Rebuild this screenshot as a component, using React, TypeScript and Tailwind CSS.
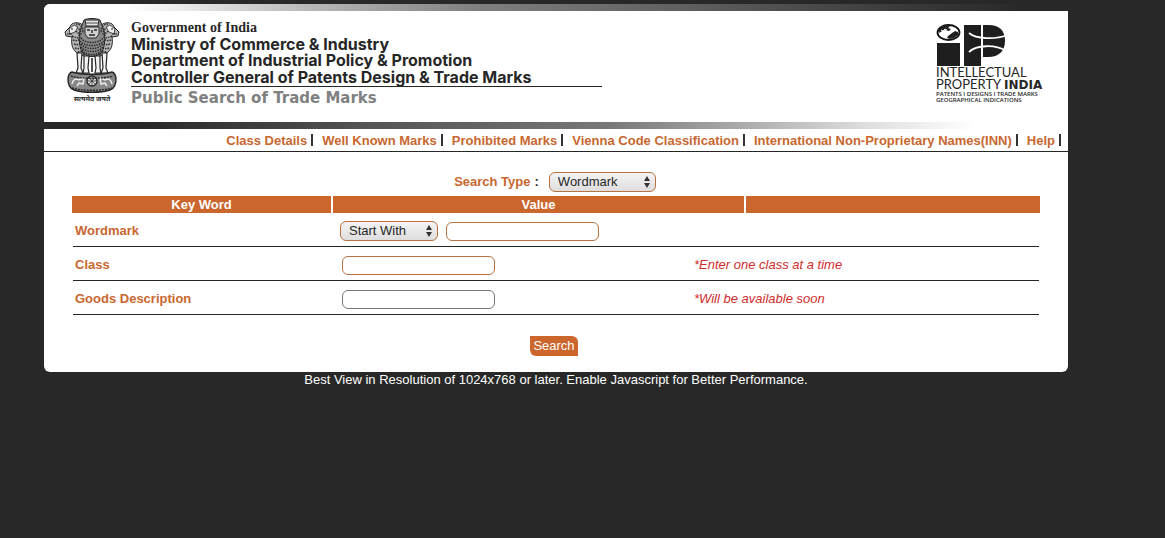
import React from "react";

const links = [
  "Class Details",
  "Well Known Marks",
  "Prohibited Marks",
  "Vienna Code Classification",
  "International Non-Proprietary Names(INN)",
  "Help",
];

function Emblem() {
  const dark = "#262626";
  return (
    <svg viewBox="0 0 56 76" className="h-[76px] w-14" role="img" aria-label="State Emblem of India">
      <g fill="#b5b5b5" stroke={dark} strokeWidth="1">
        <path d="M20 8C15 3 7 4 6 9L1 14l1 4 6 1c-1 6 0 12 4 15l8 4z" />
        <path d="M36 8C41 3 49 4 50 9l5 5-1 4-6 1c1 6 0 12-4 15l-8 4z" />
        <path d="M20 2c3-2 13-2 16 0l3 8c3 6 2 18-1 24-5 6-15 6-20 0-3-6-4-18-1-24z" fill="#8a8a8a" />
      </g>
      <g fill="none" stroke={dark} strokeWidth="1.500" strokeDasharray="1.500 1">
        <path d="M17 20c4 6 18 6 22 0M16 23c5 6 19 6 24 0M17 26c5 6 17 6 22 0M17 29c5 6 17 6 22 0M18 32c4 6 16 6 20 0M20 36c4 3 12 3 16 0" />
        <path d="M12 6c5 0 7 4 7 9M10 9c5 0 7 4 7 8M9 13c4 0 6 2 7 6M8 18c4 2 6 2 9 1M9 22c3 1 5 1 7-1M10 26c3 1 5 1 7-1M11 30c3 1 5 1 7-1M14 34l5-1" />
        <path d="M44 6c-5 0-7 4-7 9M46 9c-5 0-7 4-7 8M47 13c-4 0-6 2-7 6M48 18c-4 2-6 2-9 1M47 22c-3 1-5 1-7-1M46 26c-3 1-5 1-7-1M45 30c-3 1-5 1-7-1M42 34l-5-1" />
      </g>
      <path d="M21 2h14l-1 6H22z" fill="#e4e4e4" stroke={dark} />
      <path d="M22 5h12" stroke={dark} strokeWidth=".8" />
      <path d="M21 9h14v7l-3 4h-8l-3-4z" fill="#d0d0d0" stroke={dark} />
      <path d="M23 12h3m4 0h3M28 12v3M25 17h6" stroke={dark} strokeWidth="1.400" />
      <path d="M5 11l5-4 4 2-3 5-5 2zM51 11l-5-4-4 2 3 5 5 2z" fill="#eee" stroke={dark} strokeWidth=".8" />
      <path d="M3 16h5M53 16h-5M7 11h2M49 11h-2" stroke={dark} strokeWidth="1.200" />
      <g fill="#f2f2f2" stroke={dark} strokeWidth="1.200">
        <path d="M13 35h5l-1 15 2 5h-7l2-5z" />
        <path d="M20 38h5l-1 12 1 5h-6l1-5z" />
        <path d="M31 38h5v12l1 5h-6l1-5z" />
        <path d="M38 35h5l-1 15 2 5h-7l2-5z" />
      </g>
      <path d="M27 40h2v14h-2z" fill="#555" />
      <path d="M8 54c8 3 32 3 40 0 3 1 4 4 4 8s-2 9-6 10c-9 3-27 3-36 0-4-1-6-6-6-10s1-7 4-8z" fill="#888" stroke={dark} strokeWidth="1.400" />
      <circle cx="28" cy="63" r="5" fill="#ddd" stroke={dark} strokeWidth="1.300" />
      <path d="M28 58v10M23 63h10M24.500 59.500l7 7M31.500 59.500l-7 7" stroke={dark} strokeWidth=".7" />
      <path d="M8 66c1-5 4-6 7-4l5-2-1 6-4-1-2 3M48 66c-1-5-4-6-7-4l-5-2 1 6 4-1 2 3" fill="none" stroke="#eee" strokeWidth="1.500" />
      <path d="M7 58c9 3 33 3 42 0M8 70c9 3 31 3 40 0" fill="none" stroke={dark} strokeWidth="1.400" strokeDasharray="2 1" />
    </svg>
  );
}

function IpLogo() {
  return (
    <div className="w-[114px] text-[#262626]">
      <svg viewBox="0 0 72 42" className="block h-[42px] w-[72px]" aria-hidden="true">
        <ellipse cx="12.500" cy="8.500" rx="11" ry="7.500" fill="#fff" stroke="#111" strokeWidth="1.800" />
        <path d="M2 6c2-4 8-6 13-5l-3 3 3 1-2 2-4-1-3 1-3 2z" fill="#1e1e1e" />
        <path d="M16 9l3-2 3 1 0 3-4 3-4 1-3-1 1-2z" fill="#1e1e1e" />
        <path d="M5 6l2 1 2-2 2 1" stroke="#fff" strokeWidth="1" fill="none" />
        <path d="M1 19h23v23H1zM28 1h17v41H28z" fill="#1e1e1e" />
        <path d="M47 1h5c12 0 17 6 17 16s-6 16-17 16h-5z" fill="#1e1e1e" />
        <path d="M33 9c7 6 26 7 38 2M33 28c7-7 26-8 37-1" fill="none" stroke="#fff" strokeWidth="1.800" />
      </svg>
      <div className="font-['Lato'] text-[13px] leading-3">INTELLECTUAL</div>
      <div className="whitespace-nowrap font-['Lato'] text-[13px] leading-3">
        PROPERTY <span className="font-['DejaVu_Sans'] text-[12px] leading-3 font-bold">INDIA</span>
      </div>
      <div className="whitespace-nowrap font-['Open_Sans'] text-[6px] leading-[6px] font-semibold">PATENTS I DESIGNS I TRADE MARKS</div>
      <div className="whitespace-nowrap font-['Open_Sans'] text-[6px] leading-[6px] font-semibold">GEOGRAPHICAL INDICATIONS</div>
    </div>
  );
}

function Picker({ id, label, value, options, width }: { id: string; label: string; value: string; options: string[]; width: string }) {
  return (
    <span className={`relative inline-flex ${width}`}>
      <select
        id={id}
        aria-label={label}
        defaultValue={value}
        className="h-5 w-full appearance-none rounded-md border border-[#b87340] bg-linear-to-b from-[#f4f4f4] to-[#dedede] pl-2 text-[13px] leading-4 text-[#262626]"
      >
        {options.map((o) => (
          <option key={o}>{o}</option>
        ))}
      </select>
      <svg viewBox="0 0 6 12" className="pointer-events-none absolute top-1 right-[6px] h-3 w-[6px]" aria-hidden="true">
        <path d="M3 0l3 5H0zM3 12l3-5H0z" fill="#333" />
      </svg>
    </span>
  );
}

const field = "block h-[19px] w-[153px] rounded-md border bg-white px-2 text-[13px]";
const row = "flex h-[34px] items-center border-b border-[#262626] pt-[3px]";

export default function App() {
  return (
    <div className="min-h-screen bg-[#282828] pt-1 pl-11 font-['Liberation_Sans',Arial,sans-serif] text-[13px] text-[#262626]">
      <main className="max-w-[1024px] overflow-hidden rounded-b-md rounded-tl-md bg-white">
        <div className="h-[7px] bg-[linear-gradient(to_right,#fff_8%,#bbb_25%,#808080_42%,#606060_62%,#3a3a3a_84%,#282828_96%)]" />
        <header className="flex h-[111px] justify-between pr-[18px] pl-[19px]">
          <div className="flex">
            <div className="flex w-[58px] flex-col items-center pt-[7px]">
              <Emblem />
              <span className="font-['Noto_Sans','Noto_Sans_Devanagari',sans-serif] text-[7px] leading-[10px] font-bold whitespace-nowrap">सत्यमेव जयते</span>
            </div>
            <div className="pt-2 pl-[10px] whitespace-nowrap">
              <div className="font-['Liberation_Serif',serif] text-[14px] leading-[17px] font-bold">Government of India</div>
              <div className="font-['Inter',sans-serif] text-[16px] font-bold">
                <div className="leading-4">Ministry of Commerce &amp; Industry</div>
                <div className="leading-4">Department of Industrial Policy &amp; Promotion</div>
                <div className="w-[471px] border-b border-[#262626] leading-[18px]">
                  Controller General of Patents Design &amp; Trade Marks
                </div>
              </div>
              <h1 className="font-['DejaVu_Sans',sans-serif] text-[15px] leading-[22px] font-bold text-[#808080]">Public Search of Trade Marks</h1>
            </div>
          </div>
          <div className="pt-[13px]">
            <IpLogo />
          </div>
        </header>
        <div className="h-[7px] bg-[linear-gradient(to_right,#282828_10%,#555_32%,#777_55%,#aaa_68%,#ddd_80%,#fff_91%)]" />
        <nav className="flex h-[23px] items-center justify-end border-b border-[#262626] pr-[7px] font-bold whitespace-nowrap">
          {links.map((l) => (
            <span key={l} className="flex items-center">
              <a href="#" className="pt-px pl-[9px] text-[#c8672f]">{l}</a>
              <span className="mb-px ml-1 h-3 w-[2px] bg-[#333]" />
            </span>
          ))}
        </nav>
        <form className="px-7 pt-5 pb-4" onSubmit={(e) => e.preventDefault()}>
          <div className="flex items-center justify-center pr-[2px] font-bold">
            <label htmlFor="type" className="text-[#c8672f]">Search Type</label>
            <span className="mr-[10px] ml-1">:</span>
            <span className="font-normal">
              <Picker id="type" label="Search Type" value="Wordmark" options={["Wordmark", "Vienna Code", "Phonetic"]} width="w-[107px]" />
            </span>
          </div>
          <table className="mt-1 w-full border-collapse text-left">
            <thead>
              <tr className="h-[17px] bg-[#cb662c] text-center leading-[17px] text-white">
                <th className="w-[260px] border-r-2 border-white">Key Word</th>
                <th className="w-[413px] border-r-2 border-white">Value</th>
                <th />
              </tr>
            </thead>
          </table>
          <div className="px-px">
            <div className={row}>
              <label htmlFor="wordmark" className="w-[267px] pl-[2px] font-bold text-[#c8672f]">Wordmark</label>
              <Picker id="match" label="Match" value="Start With" options={["Start With", "Contains", "Match With"]} width="w-[98px]" />
              <input id="wordmark" className={`${field} ml-2 border-[#b87340]`} />
            </div>
            <div className={row}>
              <label htmlFor="class" className="w-[269px] pl-[2px] font-bold text-[#c8672f]">Class</label>
              <input id="class" className={`${field} border-[#b87340]`} />
              <em className="ml-[199px] text-[#d02c2c]">*Enter one class at a time</em>
            </div>
            <div className={row}>
              <label htmlFor="goods" className="w-[269px] pl-[2px] font-bold text-[#c8672f]">Goods Description</label>
              <input id="goods" className={`${field} border-[#777]`} />
              <em className="ml-[199px] text-[#d02c2c]">*Will be available soon</em>
            </div>
          </div>
          <div className="mt-[21px] flex justify-center pr-1">
            <button type="submit" className="h-5 rounded-tr-md rounded-bl-md bg-[#cb662c] px-[3px] leading-5 text-white">Search</button>
          </div>
        </form>
      </main>
      <footer className="max-w-[1024px] text-center leading-4 text-white">
        Best View in Resolution of 1024x768 or later. Enable Javascript for Better Performance.
      </footer>
    </div>
  );
}
